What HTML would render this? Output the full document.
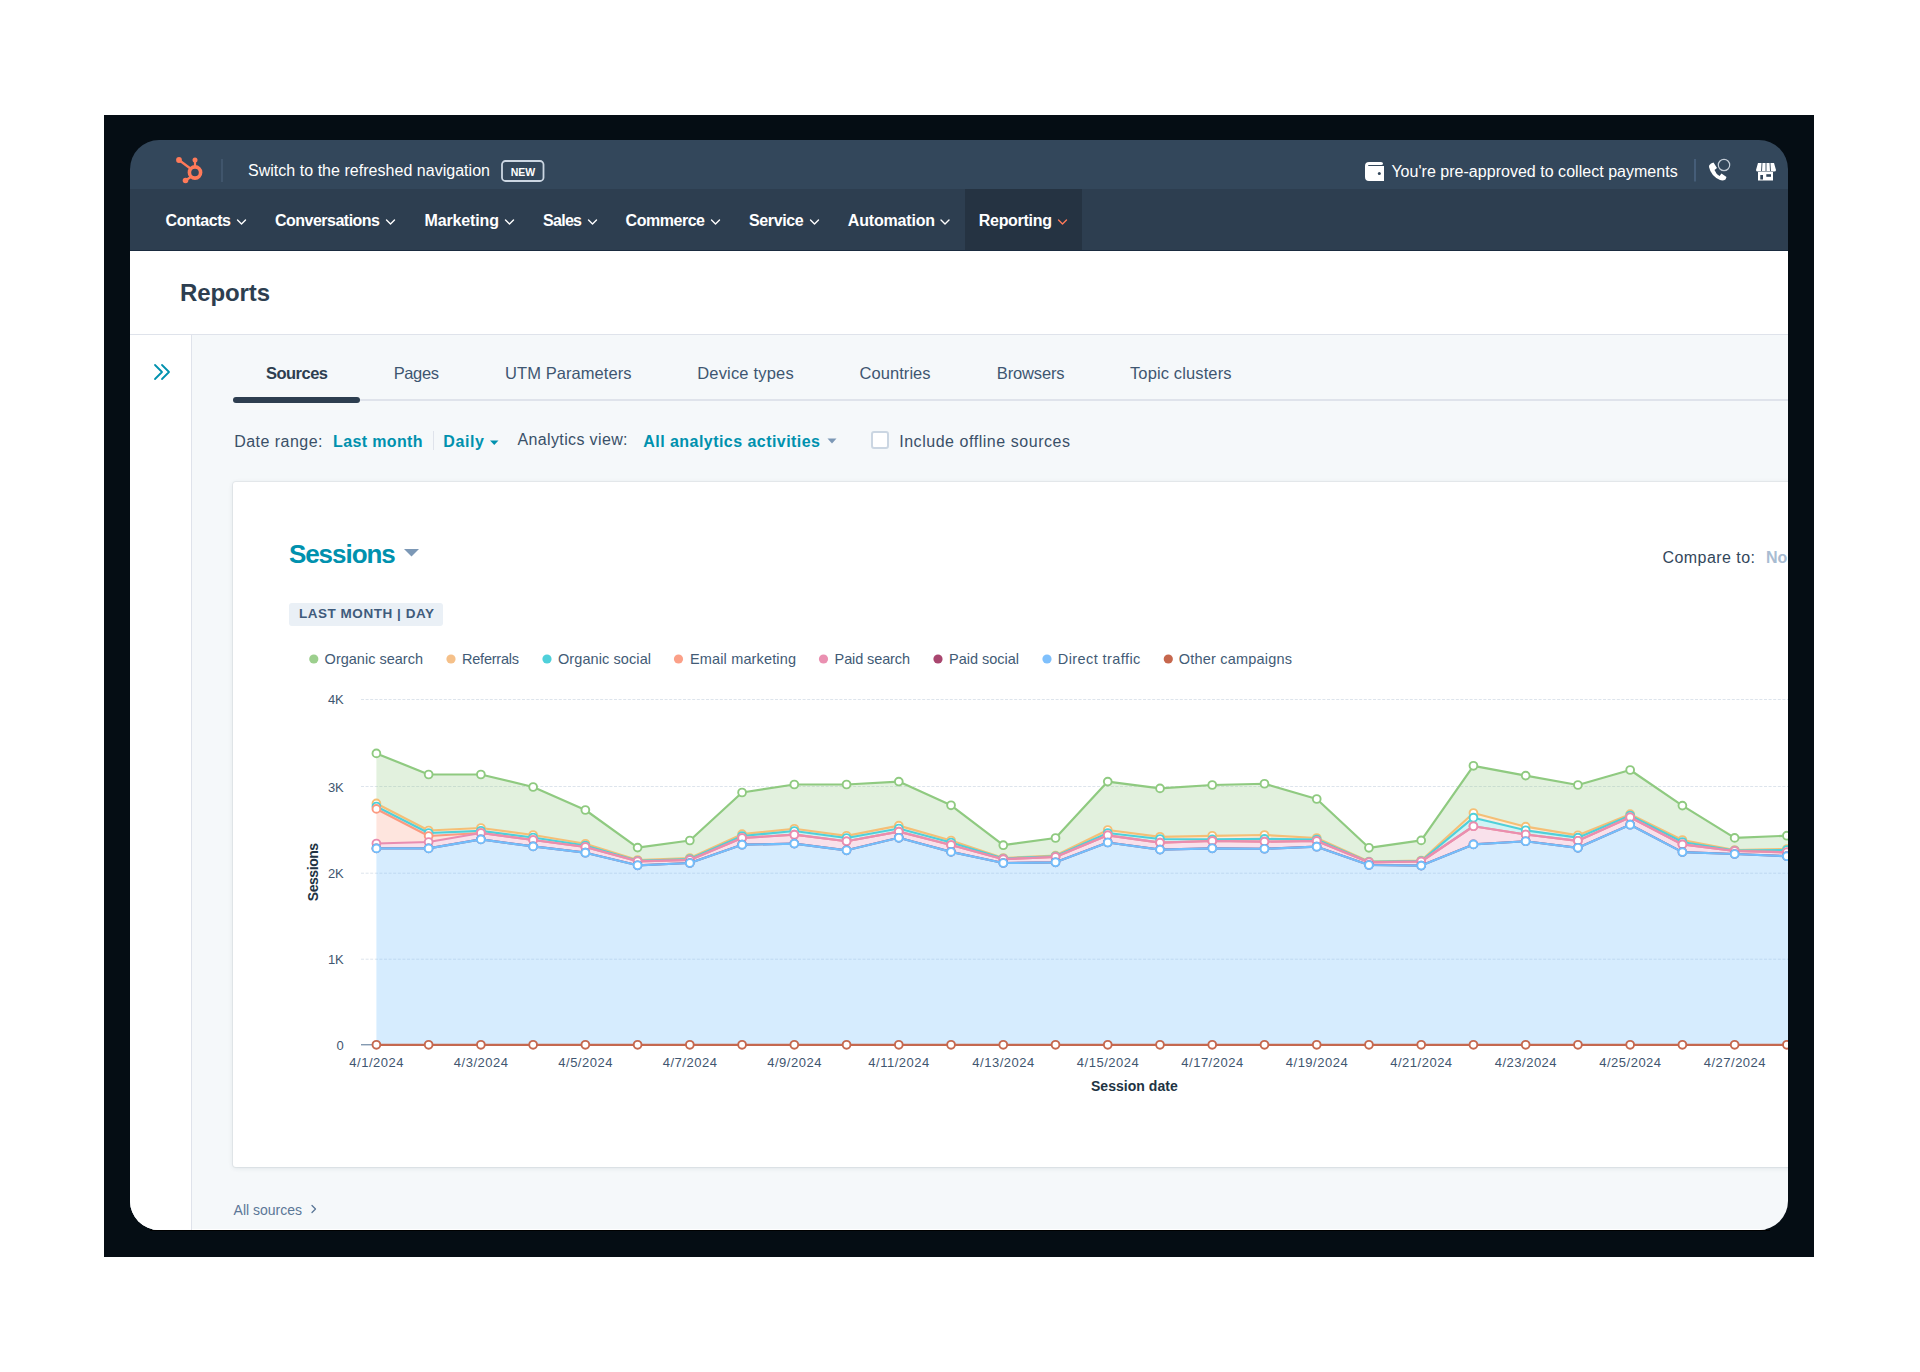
<!DOCTYPE html>
<html><head><meta charset="utf-8">
<style>
html,body{margin:0;padding:0;background:#ffffff;width:1920px;height:1372px;overflow:hidden;}
body{font-family:"Liberation Sans",sans-serif;position:relative;}
.frame{position:absolute;left:104px;top:115px;width:1710px;height:1142px;background:#050d14;}
.inner{position:absolute;left:130px;top:140px;width:1658px;height:1090px;border-radius:29px;overflow:hidden;}
.pg{position:absolute;left:-130px;top:-140px;width:1920px;height:1372px;}
.abs{position:absolute;}
.t{position:absolute;white-space:pre;}
svg{position:absolute;left:0;top:0;overflow:visible;}
</style></head>
<body>
<div class="frame"></div>
<div class="abs" style="left:150px;top:1230px;width:1620px;height:1px;background:#000000;"></div>
<div class="inner"><div class="pg">
  <div class="abs" style="left:130px;top:251px;width:1658px;height:990px;background:#f5f8fa;"></div>
  <!-- top bar -->
  <div class="abs" style="left:130px;top:140px;width:1658px;height:49px;background:#33475b;"></div>
  <!-- nav -->
  <div class="abs" style="left:130px;top:189px;width:1658px;height:62px;background:#2d3e50;"></div>
  <div class="abs" style="left:965px;top:189px;width:117px;height:62px;background:#253342;"></div>
  <div class="abs" style="left:130px;top:250px;width:1658px;height:1px;background:#1a2b3f;"></div>
  <!-- header -->
  <div class="abs" style="left:130px;top:251px;width:1658px;height:83px;background:#ffffff;border-bottom:1px solid #dfe3eb;"></div>
  <div class="abs" style="left:130px;top:1229px;width:1658px;height:1px;background:#ffffff;"></div>
  <!-- sidebar -->
  <div class="abs" style="left:130px;top:335px;width:61px;height:900px;background:#ffffff;border-right:1px solid #dfe3eb;"></div>
  <!-- tab line -->
  <div class="abs" style="left:233px;top:399px;width:1560px;height:2px;background:#dfe3eb;"></div>
  <div class="abs" style="left:233px;top:397px;width:127px;height:6px;background:#2d3e50;border-radius:3px;"></div>
  <!-- filter separator -->
  <div class="abs" style="left:432.5px;top:431px;width:1px;height:19px;background:#dfe3eb;"></div>
  <!-- checkbox -->
  <div class="abs" style="left:871px;top:431px;width:14px;height:14px;border:2px solid #cbd6e2;border-radius:3px;background:#ffffff;"></div>
  <!-- card -->
  <div class="abs" style="left:233px;top:482px;width:1600px;height:684.5px;background:#ffffff;border-radius:3px;box-shadow:0 0 0 1px rgba(45,62,80,0.06),0 1px 5px 0 rgba(45,62,80,0.12);"></div>
  <!-- badge -->
  <div class="abs" style="left:289px;top:603px;width:154px;height:22.5px;background:#eaf0f6;border-radius:3px;"></div>

  <svg width="1920" height="1372" viewBox="0 0 1920 1372">
    <!-- hubspot logo -->
    <g fill="#ff7a59" stroke="#ff7a59">
      <circle cx="195" cy="172.5" r="5.6" fill="none" stroke-width="3.6"/>
      <line x1="179" y1="160" x2="191" y2="169" stroke-width="2.2"/>
      <circle cx="179" cy="160" r="2.9" stroke="none"/>
      <line x1="195" y1="160" x2="195" y2="166" stroke-width="2.2"/>
      <circle cx="195" cy="160" r="2.5" stroke="none"/>
      <line x1="185.5" y1="180.5" x2="191.5" y2="176.5" stroke-width="2.2"/>
      <circle cx="185.5" cy="180.5" r="2.8" stroke="none"/>
    </g>
    <line x1="222" y1="159" x2="222" y2="182" stroke="#4a6078" stroke-width="1.2"/>
    <rect x="502" y="161" width="41.5" height="20" rx="3.5" fill="none" stroke="#cbd6e2" stroke-width="1.8"/>
    <!-- nav chevrons -->
    <g fill="none" stroke="#ffffff" stroke-width="1.4" stroke-linecap="round" stroke-linejoin="round">
      <polyline points="237.5,220 241.5,224 245.5,220"/>
      <polyline points="386.5,220 390.5,224 394.5,220"/>
      <polyline points="505.5,220 509.5,224 513.5,220"/>
      <polyline points="588.5,220 592.5,224 596.5,220"/>
      <polyline points="711.5,220 715.5,224 719.5,220"/>
      <polyline points="810.5,220 814.5,224 818.5,220"/>
      <polyline points="941,220 945,224 949,220"/>
      <polyline points="1058.5,220 1062.5,224 1066.5,220" stroke="#ff7a59"/>
    </g>
    <!-- wallet -->
    <g fill="#ffffff">
      <path d="M1365,166 Q1365,162 1369,162 L1381,162 Q1383,162 1383,163.5 Q1383,165 1381,165 L1369,165 Q1368,165 1368,166 L1384,166 L1384,181 L1369,181 Q1365,181 1365,177 Z"/>
      <circle cx="1379.3" cy="173.6" r="1.5" fill="#33475b"/>
    </g>
    <line x1="1695" y1="159" x2="1695" y2="181.5" stroke="#4c6582" stroke-width="1.5"/>
    <!-- phone -->
    <path d="M1711,163.5 L1713.5,162.5 L1717,168 L1714.5,170 Q1716,174 1719.5,176 L1721.5,173.5 L1726.5,177 L1725.5,179.5 Q1723,181 1720,180 Q1711,176 1709,167 Q1708.5,165 1711,163.5 Z" fill="#ffffff"/>
    <circle cx="1724" cy="165" r="5.7" fill="none" stroke="#c3ccd6" stroke-width="1.2"/>
    <!-- store -->
    <g fill="#ffffff">
      <path d="M1758,163 L1774,163 L1776,170 Q1776,171.5 1774,171.5 L1758,171.5 Q1756,171.5 1756,170 Z"/>
      <rect x="1758" y="172" width="15" height="8.5"/>
    </g>
    <g stroke="#33475b" stroke-width="0.9">
      <line x1="1762" y1="163" x2="1761.5" y2="171"/>
      <line x1="1766" y1="163" x2="1766" y2="171"/>
      <line x1="1770" y1="163" x2="1770.5" y2="171"/>
    </g>
    <rect x="1760.3" y="175" width="2.7" height="4.5" fill="#33475b"/>
    <rect x="1766.3" y="174.2" width="4.7" height="2.6" fill="#33475b"/>
    <!-- sidebar >> -->
    <g fill="none" stroke="#0091ae" stroke-width="1.8" stroke-linecap="round" stroke-linejoin="round">
      <polyline points="155,365 162,372 155,379"/>
      <polyline points="162,365 169,372 162,379"/>
    </g>
    <!-- carets -->
    <path d="M490,440.5 L498.5,440.5 L494.25,445 Z" fill="#0091ae"/>
    <path d="M827.5,438.5 L836.5,438.5 L832,443.5 Z" fill="#7c98b6"/>
    <path d="M404,549 L419,549 L411.5,556.5 Z" fill="#7c98b6"/>
    <!-- legend dots -->
    <circle cx="313.8" cy="659" r="4.6" fill="#9ccf8d"/>
    <circle cx="451" cy="659" r="4.6" fill="#f5c089"/>
    <circle cx="547" cy="659" r="4.6" fill="#4fd0da"/>
    <circle cx="678.5" cy="659" r="4.6" fill="#fba088"/>
    <circle cx="823.5" cy="659" r="4.6" fill="#ea90b1"/>
    <circle cx="938" cy="659" r="4.6" fill="#a9466f"/>
    <circle cx="1047" cy="659" r="4.6" fill="#7fc0fc"/>
    <circle cx="1168.3" cy="659" r="4.6" fill="#c6674d"/>
    <!-- all sources chevron -->
    <polyline points="312,1205.5 315.5,1209 312,1212.5" fill="none" stroke="#5b7797" stroke-width="1.3" stroke-linecap="round" stroke-linejoin="round"/>
    <!-- chart -->
    <g>
<line x1="361" y1="699.50" x2="1800" y2="699.50" stroke="#dde4ec" stroke-width="1" stroke-dasharray="3,1.6"/>
<line x1="361" y1="786.50" x2="1800" y2="786.50" stroke="#dde4ec" stroke-width="1" stroke-dasharray="3,1.6"/>
<line x1="361" y1="873.20" x2="1800" y2="873.20" stroke="#dde4ec" stroke-width="1" stroke-dasharray="3,1.6"/>
<line x1="361" y1="959.20" x2="1800" y2="959.20" stroke="#dde4ec" stroke-width="1" stroke-dasharray="3,1.6"/>
<line x1="361" y1="1044.8" x2="1800" y2="1044.8" stroke="#516f90" stroke-width="1"/>
<polygon points="376.40,753.40 428.64,774.50 480.88,774.50 533.12,787.00 585.36,810.00 637.60,847.60 689.84,840.50 742.08,792.50 794.32,784.50 846.56,784.50 898.80,781.60 951.04,805.30 1003.28,845.20 1055.52,838.00 1107.76,781.60 1160.00,788.40 1212.24,785.00 1264.48,783.75 1316.72,799.00 1368.96,847.80 1421.20,840.40 1473.44,765.80 1525.68,775.60 1577.92,785.00 1630.16,770.00 1682.40,805.60 1734.64,837.90 1786.88,835.70 1839.12,835.70 1839.12,849.00 1786.88,849.00 1734.64,850.00 1682.40,840.00 1630.16,814.20 1577.92,835.30 1525.68,826.70 1473.44,813.00 1421.20,860.50 1368.96,861.60 1316.72,838.00 1264.48,835.00 1212.24,835.80 1160.00,836.80 1107.76,830.00 1055.52,855.60 1003.28,858.00 951.04,840.50 898.80,825.60 846.56,835.80 794.32,828.75 742.08,834.20 689.84,858.00 637.60,860.00 585.36,843.75 533.12,835.00 480.88,828.00 428.64,830.50 376.40,803.40" fill="#8fca80" fill-opacity="0.26"/>
<polyline points="376.40,753.40 428.64,774.50 480.88,774.50 533.12,787.00 585.36,810.00 637.60,847.60 689.84,840.50 742.08,792.50 794.32,784.50 846.56,784.50 898.80,781.60 951.04,805.30 1003.28,845.20 1055.52,838.00 1107.76,781.60 1160.00,788.40 1212.24,785.00 1264.48,783.75 1316.72,799.00 1368.96,847.80 1421.20,840.40 1473.44,765.80 1525.68,775.60 1577.92,785.00 1630.16,770.00 1682.40,805.60 1734.64,837.90 1786.88,835.70 1839.12,835.70" fill="none" stroke="#8fca80" stroke-width="2.2" stroke-linejoin="round"/>
<circle cx="376.40" cy="753.40" r="3.9" fill="#fff" stroke="#8fca80" stroke-width="1.9"/>
<circle cx="428.64" cy="774.50" r="3.9" fill="#fff" stroke="#8fca80" stroke-width="1.9"/>
<circle cx="480.88" cy="774.50" r="3.9" fill="#fff" stroke="#8fca80" stroke-width="1.9"/>
<circle cx="533.12" cy="787.00" r="3.9" fill="#fff" stroke="#8fca80" stroke-width="1.9"/>
<circle cx="585.36" cy="810.00" r="3.9" fill="#fff" stroke="#8fca80" stroke-width="1.9"/>
<circle cx="637.60" cy="847.60" r="3.9" fill="#fff" stroke="#8fca80" stroke-width="1.9"/>
<circle cx="689.84" cy="840.50" r="3.9" fill="#fff" stroke="#8fca80" stroke-width="1.9"/>
<circle cx="742.08" cy="792.50" r="3.9" fill="#fff" stroke="#8fca80" stroke-width="1.9"/>
<circle cx="794.32" cy="784.50" r="3.9" fill="#fff" stroke="#8fca80" stroke-width="1.9"/>
<circle cx="846.56" cy="784.50" r="3.9" fill="#fff" stroke="#8fca80" stroke-width="1.9"/>
<circle cx="898.80" cy="781.60" r="3.9" fill="#fff" stroke="#8fca80" stroke-width="1.9"/>
<circle cx="951.04" cy="805.30" r="3.9" fill="#fff" stroke="#8fca80" stroke-width="1.9"/>
<circle cx="1003.28" cy="845.20" r="3.9" fill="#fff" stroke="#8fca80" stroke-width="1.9"/>
<circle cx="1055.52" cy="838.00" r="3.9" fill="#fff" stroke="#8fca80" stroke-width="1.9"/>
<circle cx="1107.76" cy="781.60" r="3.9" fill="#fff" stroke="#8fca80" stroke-width="1.9"/>
<circle cx="1160.00" cy="788.40" r="3.9" fill="#fff" stroke="#8fca80" stroke-width="1.9"/>
<circle cx="1212.24" cy="785.00" r="3.9" fill="#fff" stroke="#8fca80" stroke-width="1.9"/>
<circle cx="1264.48" cy="783.75" r="3.9" fill="#fff" stroke="#8fca80" stroke-width="1.9"/>
<circle cx="1316.72" cy="799.00" r="3.9" fill="#fff" stroke="#8fca80" stroke-width="1.9"/>
<circle cx="1368.96" cy="847.80" r="3.9" fill="#fff" stroke="#8fca80" stroke-width="1.9"/>
<circle cx="1421.20" cy="840.40" r="3.9" fill="#fff" stroke="#8fca80" stroke-width="1.9"/>
<circle cx="1473.44" cy="765.80" r="3.9" fill="#fff" stroke="#8fca80" stroke-width="1.9"/>
<circle cx="1525.68" cy="775.60" r="3.9" fill="#fff" stroke="#8fca80" stroke-width="1.9"/>
<circle cx="1577.92" cy="785.00" r="3.9" fill="#fff" stroke="#8fca80" stroke-width="1.9"/>
<circle cx="1630.16" cy="770.00" r="3.9" fill="#fff" stroke="#8fca80" stroke-width="1.9"/>
<circle cx="1682.40" cy="805.60" r="3.9" fill="#fff" stroke="#8fca80" stroke-width="1.9"/>
<circle cx="1734.64" cy="837.90" r="3.9" fill="#fff" stroke="#8fca80" stroke-width="1.9"/>
<circle cx="1786.88" cy="835.70" r="3.9" fill="#fff" stroke="#8fca80" stroke-width="1.9"/>
<circle cx="1839.12" cy="835.70" r="3.9" fill="#fff" stroke="#8fca80" stroke-width="1.9"/>
<polygon points="376.40,803.40 428.64,830.50 480.88,828.00 533.12,835.00 585.36,843.75 637.60,860.00 689.84,858.00 742.08,834.20 794.32,828.75 846.56,835.80 898.80,825.60 951.04,840.50 1003.28,858.00 1055.52,855.60 1107.76,830.00 1160.00,836.80 1212.24,835.80 1264.48,835.00 1316.72,838.00 1368.96,861.60 1421.20,860.50 1473.44,813.00 1525.68,826.70 1577.92,835.30 1630.16,814.20 1682.40,840.00 1734.64,850.00 1786.88,849.00 1839.12,849.00 1839.12,850.00 1786.88,850.00 1734.64,850.50 1682.40,842.00 1630.16,815.50 1577.92,837.70 1525.68,830.30 1473.44,817.70 1421.20,861.00 1368.96,861.90 1316.72,839.50 1264.48,838.90 1212.24,839.40 1160.00,839.00 1107.76,833.00 1055.52,856.30 1003.28,858.50 951.04,842.50 898.80,828.50 846.56,838.00 794.32,831.00 742.08,836.00 689.84,859.00 637.60,860.80 585.36,845.50 533.12,837.50 480.88,830.80 428.64,833.00 376.40,806.50" fill="#f5bf76" fill-opacity="0.26"/>
<polyline points="376.40,803.40 428.64,830.50 480.88,828.00 533.12,835.00 585.36,843.75 637.60,860.00 689.84,858.00 742.08,834.20 794.32,828.75 846.56,835.80 898.80,825.60 951.04,840.50 1003.28,858.00 1055.52,855.60 1107.76,830.00 1160.00,836.80 1212.24,835.80 1264.48,835.00 1316.72,838.00 1368.96,861.60 1421.20,860.50 1473.44,813.00 1525.68,826.70 1577.92,835.30 1630.16,814.20 1682.40,840.00 1734.64,850.00 1786.88,849.00 1839.12,849.00" fill="none" stroke="#f5bf76" stroke-width="2.2" stroke-linejoin="round"/>
<circle cx="376.40" cy="803.40" r="3.9" fill="#fff" stroke="#f5bf76" stroke-width="1.9"/>
<circle cx="428.64" cy="830.50" r="3.9" fill="#fff" stroke="#f5bf76" stroke-width="1.9"/>
<circle cx="480.88" cy="828.00" r="3.9" fill="#fff" stroke="#f5bf76" stroke-width="1.9"/>
<circle cx="533.12" cy="835.00" r="3.9" fill="#fff" stroke="#f5bf76" stroke-width="1.9"/>
<circle cx="585.36" cy="843.75" r="3.9" fill="#fff" stroke="#f5bf76" stroke-width="1.9"/>
<circle cx="637.60" cy="860.00" r="3.9" fill="#fff" stroke="#f5bf76" stroke-width="1.9"/>
<circle cx="689.84" cy="858.00" r="3.9" fill="#fff" stroke="#f5bf76" stroke-width="1.9"/>
<circle cx="742.08" cy="834.20" r="3.9" fill="#fff" stroke="#f5bf76" stroke-width="1.9"/>
<circle cx="794.32" cy="828.75" r="3.9" fill="#fff" stroke="#f5bf76" stroke-width="1.9"/>
<circle cx="846.56" cy="835.80" r="3.9" fill="#fff" stroke="#f5bf76" stroke-width="1.9"/>
<circle cx="898.80" cy="825.60" r="3.9" fill="#fff" stroke="#f5bf76" stroke-width="1.9"/>
<circle cx="951.04" cy="840.50" r="3.9" fill="#fff" stroke="#f5bf76" stroke-width="1.9"/>
<circle cx="1003.28" cy="858.00" r="3.9" fill="#fff" stroke="#f5bf76" stroke-width="1.9"/>
<circle cx="1055.52" cy="855.60" r="3.9" fill="#fff" stroke="#f5bf76" stroke-width="1.9"/>
<circle cx="1107.76" cy="830.00" r="3.9" fill="#fff" stroke="#f5bf76" stroke-width="1.9"/>
<circle cx="1160.00" cy="836.80" r="3.9" fill="#fff" stroke="#f5bf76" stroke-width="1.9"/>
<circle cx="1212.24" cy="835.80" r="3.9" fill="#fff" stroke="#f5bf76" stroke-width="1.9"/>
<circle cx="1264.48" cy="835.00" r="3.9" fill="#fff" stroke="#f5bf76" stroke-width="1.9"/>
<circle cx="1316.72" cy="838.00" r="3.9" fill="#fff" stroke="#f5bf76" stroke-width="1.9"/>
<circle cx="1368.96" cy="861.60" r="3.9" fill="#fff" stroke="#f5bf76" stroke-width="1.9"/>
<circle cx="1421.20" cy="860.50" r="3.9" fill="#fff" stroke="#f5bf76" stroke-width="1.9"/>
<circle cx="1473.44" cy="813.00" r="3.9" fill="#fff" stroke="#f5bf76" stroke-width="1.9"/>
<circle cx="1525.68" cy="826.70" r="3.9" fill="#fff" stroke="#f5bf76" stroke-width="1.9"/>
<circle cx="1577.92" cy="835.30" r="3.9" fill="#fff" stroke="#f5bf76" stroke-width="1.9"/>
<circle cx="1630.16" cy="814.20" r="3.9" fill="#fff" stroke="#f5bf76" stroke-width="1.9"/>
<circle cx="1682.40" cy="840.00" r="3.9" fill="#fff" stroke="#f5bf76" stroke-width="1.9"/>
<circle cx="1734.64" cy="850.00" r="3.9" fill="#fff" stroke="#f5bf76" stroke-width="1.9"/>
<circle cx="1786.88" cy="849.00" r="3.9" fill="#fff" stroke="#f5bf76" stroke-width="1.9"/>
<circle cx="1839.12" cy="849.00" r="3.9" fill="#fff" stroke="#f5bf76" stroke-width="1.9"/>
<polygon points="376.40,806.50 428.64,833.00 480.88,830.80 533.12,837.50 585.36,845.50 637.60,860.80 689.84,859.00 742.08,836.00 794.32,831.00 846.56,838.00 898.80,828.50 951.04,842.50 1003.28,858.50 1055.52,856.30 1107.76,833.00 1160.00,839.00 1212.24,839.40 1264.48,838.90 1316.72,839.50 1368.96,861.90 1421.20,861.00 1473.44,817.70 1525.68,830.30 1577.92,837.70 1630.16,815.50 1682.40,842.00 1734.64,850.50 1786.88,850.00 1839.12,850.00 1839.12,852.30 1786.88,852.30 1734.64,851.00 1682.40,844.40 1630.16,817.30 1577.92,840.80 1525.68,834.50 1473.44,826.25 1421.20,861.50 1368.96,862.30 1316.72,841.00 1264.48,841.60 1212.24,841.00 1160.00,842.60 1107.76,835.30 1055.52,857.00 1003.28,859.20 951.04,845.00 898.80,831.60 846.56,841.25 794.32,834.70 742.08,838.00 689.84,860.00 637.60,861.30 585.36,847.00 533.12,840.00 480.88,833.00 428.64,836.00 376.40,808.90" fill="#4fd0da" fill-opacity="0.26"/>
<polyline points="376.40,806.50 428.64,833.00 480.88,830.80 533.12,837.50 585.36,845.50 637.60,860.80 689.84,859.00 742.08,836.00 794.32,831.00 846.56,838.00 898.80,828.50 951.04,842.50 1003.28,858.50 1055.52,856.30 1107.76,833.00 1160.00,839.00 1212.24,839.40 1264.48,838.90 1316.72,839.50 1368.96,861.90 1421.20,861.00 1473.44,817.70 1525.68,830.30 1577.92,837.70 1630.16,815.50 1682.40,842.00 1734.64,850.50 1786.88,850.00 1839.12,850.00" fill="none" stroke="#4fd0da" stroke-width="2.2" stroke-linejoin="round"/>
<circle cx="376.40" cy="806.50" r="3.9" fill="#fff" stroke="#4fd0da" stroke-width="1.9"/>
<circle cx="428.64" cy="833.00" r="3.9" fill="#fff" stroke="#4fd0da" stroke-width="1.9"/>
<circle cx="480.88" cy="830.80" r="3.9" fill="#fff" stroke="#4fd0da" stroke-width="1.9"/>
<circle cx="533.12" cy="837.50" r="3.9" fill="#fff" stroke="#4fd0da" stroke-width="1.9"/>
<circle cx="585.36" cy="845.50" r="3.9" fill="#fff" stroke="#4fd0da" stroke-width="1.9"/>
<circle cx="637.60" cy="860.80" r="3.9" fill="#fff" stroke="#4fd0da" stroke-width="1.9"/>
<circle cx="689.84" cy="859.00" r="3.9" fill="#fff" stroke="#4fd0da" stroke-width="1.9"/>
<circle cx="742.08" cy="836.00" r="3.9" fill="#fff" stroke="#4fd0da" stroke-width="1.9"/>
<circle cx="794.32" cy="831.00" r="3.9" fill="#fff" stroke="#4fd0da" stroke-width="1.9"/>
<circle cx="846.56" cy="838.00" r="3.9" fill="#fff" stroke="#4fd0da" stroke-width="1.9"/>
<circle cx="898.80" cy="828.50" r="3.9" fill="#fff" stroke="#4fd0da" stroke-width="1.9"/>
<circle cx="951.04" cy="842.50" r="3.9" fill="#fff" stroke="#4fd0da" stroke-width="1.9"/>
<circle cx="1003.28" cy="858.50" r="3.9" fill="#fff" stroke="#4fd0da" stroke-width="1.9"/>
<circle cx="1055.52" cy="856.30" r="3.9" fill="#fff" stroke="#4fd0da" stroke-width="1.9"/>
<circle cx="1107.76" cy="833.00" r="3.9" fill="#fff" stroke="#4fd0da" stroke-width="1.9"/>
<circle cx="1160.00" cy="839.00" r="3.9" fill="#fff" stroke="#4fd0da" stroke-width="1.9"/>
<circle cx="1212.24" cy="839.40" r="3.9" fill="#fff" stroke="#4fd0da" stroke-width="1.9"/>
<circle cx="1264.48" cy="838.90" r="3.9" fill="#fff" stroke="#4fd0da" stroke-width="1.9"/>
<circle cx="1316.72" cy="839.50" r="3.9" fill="#fff" stroke="#4fd0da" stroke-width="1.9"/>
<circle cx="1368.96" cy="861.90" r="3.9" fill="#fff" stroke="#4fd0da" stroke-width="1.9"/>
<circle cx="1421.20" cy="861.00" r="3.9" fill="#fff" stroke="#4fd0da" stroke-width="1.9"/>
<circle cx="1473.44" cy="817.70" r="3.9" fill="#fff" stroke="#4fd0da" stroke-width="1.9"/>
<circle cx="1525.68" cy="830.30" r="3.9" fill="#fff" stroke="#4fd0da" stroke-width="1.9"/>
<circle cx="1577.92" cy="837.70" r="3.9" fill="#fff" stroke="#4fd0da" stroke-width="1.9"/>
<circle cx="1630.16" cy="815.50" r="3.9" fill="#fff" stroke="#4fd0da" stroke-width="1.9"/>
<circle cx="1682.40" cy="842.00" r="3.9" fill="#fff" stroke="#4fd0da" stroke-width="1.9"/>
<circle cx="1734.64" cy="850.50" r="3.9" fill="#fff" stroke="#4fd0da" stroke-width="1.9"/>
<circle cx="1786.88" cy="850.00" r="3.9" fill="#fff" stroke="#4fd0da" stroke-width="1.9"/>
<circle cx="1839.12" cy="850.00" r="3.9" fill="#fff" stroke="#4fd0da" stroke-width="1.9"/>
<polygon points="376.40,808.90 428.64,836.00 480.88,833.00 533.12,840.00 585.36,847.00 637.60,861.30 689.84,860.00 742.08,838.00 794.32,834.70 846.56,841.25 898.80,831.60 951.04,845.00 1003.28,859.20 1055.52,857.00 1107.76,835.30 1160.00,842.60 1212.24,841.00 1264.48,841.60 1316.72,841.00 1368.96,862.30 1421.20,861.50 1473.44,826.25 1525.68,834.50 1577.92,840.80 1630.16,817.30 1682.40,844.40 1734.64,851.00 1786.88,852.30 1839.12,852.30 1839.12,852.30 1786.88,852.30 1734.64,851.00 1682.40,844.40 1630.16,817.30 1577.92,840.80 1525.68,834.50 1473.44,826.25 1421.20,861.50 1368.96,862.30 1316.72,841.00 1264.48,841.60 1212.24,841.00 1160.00,842.60 1107.76,835.30 1055.52,857.00 1003.28,859.20 951.04,845.00 898.80,831.60 846.56,841.25 794.32,834.70 742.08,838.00 689.84,860.00 637.60,861.30 585.36,847.00 533.12,840.00 480.88,833.00 428.64,842.00 376.40,843.50" fill="#fb9a80" fill-opacity="0.26"/>
<polyline points="376.40,808.90 428.64,836.00 480.88,833.00 533.12,840.00 585.36,847.00 637.60,861.30 689.84,860.00 742.08,838.00 794.32,834.70 846.56,841.25 898.80,831.60 951.04,845.00 1003.28,859.20 1055.52,857.00 1107.76,835.30 1160.00,842.60 1212.24,841.00 1264.48,841.60 1316.72,841.00 1368.96,862.30 1421.20,861.50 1473.44,826.25 1525.68,834.50 1577.92,840.80 1630.16,817.30 1682.40,844.40 1734.64,851.00 1786.88,852.30 1839.12,852.30" fill="none" stroke="#fb9a80" stroke-width="2.2" stroke-linejoin="round"/>
<circle cx="376.40" cy="808.90" r="3.9" fill="#fff" stroke="#fb9a80" stroke-width="1.9"/>
<circle cx="428.64" cy="836.00" r="3.9" fill="#fff" stroke="#fb9a80" stroke-width="1.9"/>
<circle cx="480.88" cy="833.00" r="3.9" fill="#fff" stroke="#fb9a80" stroke-width="1.9"/>
<circle cx="533.12" cy="840.00" r="3.9" fill="#fff" stroke="#fb9a80" stroke-width="1.9"/>
<circle cx="585.36" cy="847.00" r="3.9" fill="#fff" stroke="#fb9a80" stroke-width="1.9"/>
<circle cx="637.60" cy="861.30" r="3.9" fill="#fff" stroke="#fb9a80" stroke-width="1.9"/>
<circle cx="689.84" cy="860.00" r="3.9" fill="#fff" stroke="#fb9a80" stroke-width="1.9"/>
<circle cx="742.08" cy="838.00" r="3.9" fill="#fff" stroke="#fb9a80" stroke-width="1.9"/>
<circle cx="794.32" cy="834.70" r="3.9" fill="#fff" stroke="#fb9a80" stroke-width="1.9"/>
<circle cx="846.56" cy="841.25" r="3.9" fill="#fff" stroke="#fb9a80" stroke-width="1.9"/>
<circle cx="898.80" cy="831.60" r="3.9" fill="#fff" stroke="#fb9a80" stroke-width="1.9"/>
<circle cx="951.04" cy="845.00" r="3.9" fill="#fff" stroke="#fb9a80" stroke-width="1.9"/>
<circle cx="1003.28" cy="859.20" r="3.9" fill="#fff" stroke="#fb9a80" stroke-width="1.9"/>
<circle cx="1055.52" cy="857.00" r="3.9" fill="#fff" stroke="#fb9a80" stroke-width="1.9"/>
<circle cx="1107.76" cy="835.30" r="3.9" fill="#fff" stroke="#fb9a80" stroke-width="1.9"/>
<circle cx="1160.00" cy="842.60" r="3.9" fill="#fff" stroke="#fb9a80" stroke-width="1.9"/>
<circle cx="1212.24" cy="841.00" r="3.9" fill="#fff" stroke="#fb9a80" stroke-width="1.9"/>
<circle cx="1264.48" cy="841.60" r="3.9" fill="#fff" stroke="#fb9a80" stroke-width="1.9"/>
<circle cx="1316.72" cy="841.00" r="3.9" fill="#fff" stroke="#fb9a80" stroke-width="1.9"/>
<circle cx="1368.96" cy="862.30" r="3.9" fill="#fff" stroke="#fb9a80" stroke-width="1.9"/>
<circle cx="1421.20" cy="861.50" r="3.9" fill="#fff" stroke="#fb9a80" stroke-width="1.9"/>
<circle cx="1473.44" cy="826.25" r="3.9" fill="#fff" stroke="#fb9a80" stroke-width="1.9"/>
<circle cx="1525.68" cy="834.50" r="3.9" fill="#fff" stroke="#fb9a80" stroke-width="1.9"/>
<circle cx="1577.92" cy="840.80" r="3.9" fill="#fff" stroke="#fb9a80" stroke-width="1.9"/>
<circle cx="1630.16" cy="817.30" r="3.9" fill="#fff" stroke="#fb9a80" stroke-width="1.9"/>
<circle cx="1682.40" cy="844.40" r="3.9" fill="#fff" stroke="#fb9a80" stroke-width="1.9"/>
<circle cx="1734.64" cy="851.00" r="3.9" fill="#fff" stroke="#fb9a80" stroke-width="1.9"/>
<circle cx="1786.88" cy="852.30" r="3.9" fill="#fff" stroke="#fb9a80" stroke-width="1.9"/>
<circle cx="1839.12" cy="852.30" r="3.9" fill="#fff" stroke="#fb9a80" stroke-width="1.9"/>
<polygon points="376.40,843.50 428.64,842.00 480.88,833.00 533.12,840.00 585.36,847.00 637.60,861.30 689.84,860.00 742.08,838.00 794.32,834.70 846.56,841.25 898.80,831.60 951.04,845.00 1003.28,859.20 1055.52,857.00 1107.76,835.30 1160.00,842.60 1212.24,841.00 1264.48,841.60 1316.72,841.00 1368.96,862.30 1421.20,861.50 1473.44,826.25 1525.68,834.50 1577.92,840.80 1630.16,817.30 1682.40,844.40 1734.64,851.00 1786.88,852.30 1839.12,852.30 1839.12,856.20 1786.88,856.20 1734.64,854.00 1682.40,852.10 1630.16,824.70 1577.92,847.80 1525.68,841.25 1473.44,844.40 1421.20,865.60 1368.96,865.00 1316.72,846.70 1264.48,848.75 1212.24,848.30 1160.00,849.60 1107.76,842.50 1055.52,862.30 1003.28,863.00 951.04,851.90 898.80,837.80 846.56,850.30 794.32,843.60 742.08,844.70 689.84,863.00 637.60,865.30 585.36,852.70 533.12,846.40 480.88,839.40 428.64,848.40 376.40,848.40" fill="#e98db0" fill-opacity="0.26"/>
<polyline points="376.40,843.50 428.64,842.00 480.88,833.00 533.12,840.00 585.36,847.00 637.60,861.30 689.84,860.00 742.08,838.00 794.32,834.70 846.56,841.25 898.80,831.60 951.04,845.00 1003.28,859.20 1055.52,857.00 1107.76,835.30 1160.00,842.60 1212.24,841.00 1264.48,841.60 1316.72,841.00 1368.96,862.30 1421.20,861.50 1473.44,826.25 1525.68,834.50 1577.92,840.80 1630.16,817.30 1682.40,844.40 1734.64,851.00 1786.88,852.30 1839.12,852.30" fill="none" stroke="#e98db0" stroke-width="2.2" stroke-linejoin="round"/>
<circle cx="376.40" cy="843.50" r="3.9" fill="#fff" stroke="#e98db0" stroke-width="1.9"/>
<circle cx="428.64" cy="842.00" r="3.9" fill="#fff" stroke="#e98db0" stroke-width="1.9"/>
<circle cx="480.88" cy="833.00" r="3.9" fill="#fff" stroke="#e98db0" stroke-width="1.9"/>
<circle cx="533.12" cy="840.00" r="3.9" fill="#fff" stroke="#e98db0" stroke-width="1.9"/>
<circle cx="585.36" cy="847.00" r="3.9" fill="#fff" stroke="#e98db0" stroke-width="1.9"/>
<circle cx="637.60" cy="861.30" r="3.9" fill="#fff" stroke="#e98db0" stroke-width="1.9"/>
<circle cx="689.84" cy="860.00" r="3.9" fill="#fff" stroke="#e98db0" stroke-width="1.9"/>
<circle cx="742.08" cy="838.00" r="3.9" fill="#fff" stroke="#e98db0" stroke-width="1.9"/>
<circle cx="794.32" cy="834.70" r="3.9" fill="#fff" stroke="#e98db0" stroke-width="1.9"/>
<circle cx="846.56" cy="841.25" r="3.9" fill="#fff" stroke="#e98db0" stroke-width="1.9"/>
<circle cx="898.80" cy="831.60" r="3.9" fill="#fff" stroke="#e98db0" stroke-width="1.9"/>
<circle cx="951.04" cy="845.00" r="3.9" fill="#fff" stroke="#e98db0" stroke-width="1.9"/>
<circle cx="1003.28" cy="859.20" r="3.9" fill="#fff" stroke="#e98db0" stroke-width="1.9"/>
<circle cx="1055.52" cy="857.00" r="3.9" fill="#fff" stroke="#e98db0" stroke-width="1.9"/>
<circle cx="1107.76" cy="835.30" r="3.9" fill="#fff" stroke="#e98db0" stroke-width="1.9"/>
<circle cx="1160.00" cy="842.60" r="3.9" fill="#fff" stroke="#e98db0" stroke-width="1.9"/>
<circle cx="1212.24" cy="841.00" r="3.9" fill="#fff" stroke="#e98db0" stroke-width="1.9"/>
<circle cx="1264.48" cy="841.60" r="3.9" fill="#fff" stroke="#e98db0" stroke-width="1.9"/>
<circle cx="1316.72" cy="841.00" r="3.9" fill="#fff" stroke="#e98db0" stroke-width="1.9"/>
<circle cx="1368.96" cy="862.30" r="3.9" fill="#fff" stroke="#e98db0" stroke-width="1.9"/>
<circle cx="1421.20" cy="861.50" r="3.9" fill="#fff" stroke="#e98db0" stroke-width="1.9"/>
<circle cx="1473.44" cy="826.25" r="3.9" fill="#fff" stroke="#e98db0" stroke-width="1.9"/>
<circle cx="1525.68" cy="834.50" r="3.9" fill="#fff" stroke="#e98db0" stroke-width="1.9"/>
<circle cx="1577.92" cy="840.80" r="3.9" fill="#fff" stroke="#e98db0" stroke-width="1.9"/>
<circle cx="1630.16" cy="817.30" r="3.9" fill="#fff" stroke="#e98db0" stroke-width="1.9"/>
<circle cx="1682.40" cy="844.40" r="3.9" fill="#fff" stroke="#e98db0" stroke-width="1.9"/>
<circle cx="1734.64" cy="851.00" r="3.9" fill="#fff" stroke="#e98db0" stroke-width="1.9"/>
<circle cx="1786.88" cy="852.30" r="3.9" fill="#fff" stroke="#e98db0" stroke-width="1.9"/>
<circle cx="1839.12" cy="852.30" r="3.9" fill="#fff" stroke="#e98db0" stroke-width="1.9"/>
<polygon points="376.40,848.40 428.64,848.40 480.88,839.40 533.12,846.40 585.36,852.70 637.60,865.30 689.84,863.00 742.08,844.70 794.32,843.60 846.56,850.30 898.80,837.80 951.04,851.90 1003.28,863.00 1055.52,862.30 1107.76,842.50 1160.00,849.60 1212.24,848.30 1264.48,848.75 1316.72,846.70 1368.96,865.00 1421.20,865.60 1473.44,844.40 1525.68,841.25 1577.92,847.80 1630.16,824.70 1682.40,852.10 1734.64,854.00 1786.88,856.20 1839.12,856.20 1839.12,856.20 1786.88,856.20 1734.64,854.00 1682.40,852.10 1630.16,824.70 1577.92,847.80 1525.68,841.25 1473.44,844.40 1421.20,865.60 1368.96,865.00 1316.72,846.70 1264.48,848.75 1212.24,848.30 1160.00,849.60 1107.76,842.50 1055.52,862.30 1003.28,863.00 951.04,851.90 898.80,837.80 846.56,850.30 794.32,843.60 742.08,844.70 689.84,863.00 637.60,865.30 585.36,852.70 533.12,846.40 480.88,839.40 428.64,848.40 376.40,848.40" fill="#a9466f" fill-opacity="0.26"/>
<polyline points="376.40,848.40 428.64,848.40 480.88,839.40 533.12,846.40 585.36,852.70 637.60,865.30 689.84,863.00 742.08,844.70 794.32,843.60 846.56,850.30 898.80,837.80 951.04,851.90 1003.28,863.00 1055.52,862.30 1107.76,842.50 1160.00,849.60 1212.24,848.30 1264.48,848.75 1316.72,846.70 1368.96,865.00 1421.20,865.60 1473.44,844.40 1525.68,841.25 1577.92,847.80 1630.16,824.70 1682.40,852.10 1734.64,854.00 1786.88,856.20 1839.12,856.20" fill="none" stroke="#a9466f" stroke-width="2.2" stroke-linejoin="round"/>
<circle cx="376.40" cy="848.40" r="3.9" fill="#fff" stroke="#a9466f" stroke-width="1.9"/>
<circle cx="428.64" cy="848.40" r="3.9" fill="#fff" stroke="#a9466f" stroke-width="1.9"/>
<circle cx="480.88" cy="839.40" r="3.9" fill="#fff" stroke="#a9466f" stroke-width="1.9"/>
<circle cx="533.12" cy="846.40" r="3.9" fill="#fff" stroke="#a9466f" stroke-width="1.9"/>
<circle cx="585.36" cy="852.70" r="3.9" fill="#fff" stroke="#a9466f" stroke-width="1.9"/>
<circle cx="637.60" cy="865.30" r="3.9" fill="#fff" stroke="#a9466f" stroke-width="1.9"/>
<circle cx="689.84" cy="863.00" r="3.9" fill="#fff" stroke="#a9466f" stroke-width="1.9"/>
<circle cx="742.08" cy="844.70" r="3.9" fill="#fff" stroke="#a9466f" stroke-width="1.9"/>
<circle cx="794.32" cy="843.60" r="3.9" fill="#fff" stroke="#a9466f" stroke-width="1.9"/>
<circle cx="846.56" cy="850.30" r="3.9" fill="#fff" stroke="#a9466f" stroke-width="1.9"/>
<circle cx="898.80" cy="837.80" r="3.9" fill="#fff" stroke="#a9466f" stroke-width="1.9"/>
<circle cx="951.04" cy="851.90" r="3.9" fill="#fff" stroke="#a9466f" stroke-width="1.9"/>
<circle cx="1003.28" cy="863.00" r="3.9" fill="#fff" stroke="#a9466f" stroke-width="1.9"/>
<circle cx="1055.52" cy="862.30" r="3.9" fill="#fff" stroke="#a9466f" stroke-width="1.9"/>
<circle cx="1107.76" cy="842.50" r="3.9" fill="#fff" stroke="#a9466f" stroke-width="1.9"/>
<circle cx="1160.00" cy="849.60" r="3.9" fill="#fff" stroke="#a9466f" stroke-width="1.9"/>
<circle cx="1212.24" cy="848.30" r="3.9" fill="#fff" stroke="#a9466f" stroke-width="1.9"/>
<circle cx="1264.48" cy="848.75" r="3.9" fill="#fff" stroke="#a9466f" stroke-width="1.9"/>
<circle cx="1316.72" cy="846.70" r="3.9" fill="#fff" stroke="#a9466f" stroke-width="1.9"/>
<circle cx="1368.96" cy="865.00" r="3.9" fill="#fff" stroke="#a9466f" stroke-width="1.9"/>
<circle cx="1421.20" cy="865.60" r="3.9" fill="#fff" stroke="#a9466f" stroke-width="1.9"/>
<circle cx="1473.44" cy="844.40" r="3.9" fill="#fff" stroke="#a9466f" stroke-width="1.9"/>
<circle cx="1525.68" cy="841.25" r="3.9" fill="#fff" stroke="#a9466f" stroke-width="1.9"/>
<circle cx="1577.92" cy="847.80" r="3.9" fill="#fff" stroke="#a9466f" stroke-width="1.9"/>
<circle cx="1630.16" cy="824.70" r="3.9" fill="#fff" stroke="#a9466f" stroke-width="1.9"/>
<circle cx="1682.40" cy="852.10" r="3.9" fill="#fff" stroke="#a9466f" stroke-width="1.9"/>
<circle cx="1734.64" cy="854.00" r="3.9" fill="#fff" stroke="#a9466f" stroke-width="1.9"/>
<circle cx="1786.88" cy="856.20" r="3.9" fill="#fff" stroke="#a9466f" stroke-width="1.9"/>
<circle cx="1839.12" cy="856.20" r="3.9" fill="#fff" stroke="#a9466f" stroke-width="1.9"/>
<polygon points="376.40,848.40 428.64,848.40 480.88,839.40 533.12,846.40 585.36,852.70 637.60,865.30 689.84,863.00 742.08,844.70 794.32,843.60 846.56,850.30 898.80,837.80 951.04,851.90 1003.28,863.00 1055.52,862.30 1107.76,842.50 1160.00,849.60 1212.24,848.30 1264.48,848.75 1316.72,846.70 1368.96,865.00 1421.20,865.60 1473.44,844.40 1525.68,841.25 1577.92,847.80 1630.16,824.70 1682.40,852.10 1734.64,854.00 1786.88,856.20 1839.12,856.20 1839.12,1044.80 1786.88,1044.80 1734.64,1044.80 1682.40,1044.80 1630.16,1044.80 1577.92,1044.80 1525.68,1044.80 1473.44,1044.80 1421.20,1044.80 1368.96,1044.80 1316.72,1044.80 1264.48,1044.80 1212.24,1044.80 1160.00,1044.80 1107.76,1044.80 1055.52,1044.80 1003.28,1044.80 951.04,1044.80 898.80,1044.80 846.56,1044.80 794.32,1044.80 742.08,1044.80 689.84,1044.80 637.60,1044.80 585.36,1044.80 533.12,1044.80 480.88,1044.80 428.64,1044.80 376.40,1044.80" fill="#72befb" fill-opacity="0.29"/>
<polyline points="376.40,848.40 428.64,848.40 480.88,839.40 533.12,846.40 585.36,852.70 637.60,865.30 689.84,863.00 742.08,844.70 794.32,843.60 846.56,850.30 898.80,837.80 951.04,851.90 1003.28,863.00 1055.52,862.30 1107.76,842.50 1160.00,849.60 1212.24,848.30 1264.48,848.75 1316.72,846.70 1368.96,865.00 1421.20,865.60 1473.44,844.40 1525.68,841.25 1577.92,847.80 1630.16,824.70 1682.40,852.10 1734.64,854.00 1786.88,856.20 1839.12,856.20" fill="none" stroke="#72befb" stroke-width="2.2" stroke-linejoin="round"/>
<circle cx="376.40" cy="848.40" r="3.9" fill="#fff" stroke="#72befb" stroke-width="1.9"/>
<circle cx="428.64" cy="848.40" r="3.9" fill="#fff" stroke="#72befb" stroke-width="1.9"/>
<circle cx="480.88" cy="839.40" r="3.9" fill="#fff" stroke="#72befb" stroke-width="1.9"/>
<circle cx="533.12" cy="846.40" r="3.9" fill="#fff" stroke="#72befb" stroke-width="1.9"/>
<circle cx="585.36" cy="852.70" r="3.9" fill="#fff" stroke="#72befb" stroke-width="1.9"/>
<circle cx="637.60" cy="865.30" r="3.9" fill="#fff" stroke="#72befb" stroke-width="1.9"/>
<circle cx="689.84" cy="863.00" r="3.9" fill="#fff" stroke="#72befb" stroke-width="1.9"/>
<circle cx="742.08" cy="844.70" r="3.9" fill="#fff" stroke="#72befb" stroke-width="1.9"/>
<circle cx="794.32" cy="843.60" r="3.9" fill="#fff" stroke="#72befb" stroke-width="1.9"/>
<circle cx="846.56" cy="850.30" r="3.9" fill="#fff" stroke="#72befb" stroke-width="1.9"/>
<circle cx="898.80" cy="837.80" r="3.9" fill="#fff" stroke="#72befb" stroke-width="1.9"/>
<circle cx="951.04" cy="851.90" r="3.9" fill="#fff" stroke="#72befb" stroke-width="1.9"/>
<circle cx="1003.28" cy="863.00" r="3.9" fill="#fff" stroke="#72befb" stroke-width="1.9"/>
<circle cx="1055.52" cy="862.30" r="3.9" fill="#fff" stroke="#72befb" stroke-width="1.9"/>
<circle cx="1107.76" cy="842.50" r="3.9" fill="#fff" stroke="#72befb" stroke-width="1.9"/>
<circle cx="1160.00" cy="849.60" r="3.9" fill="#fff" stroke="#72befb" stroke-width="1.9"/>
<circle cx="1212.24" cy="848.30" r="3.9" fill="#fff" stroke="#72befb" stroke-width="1.9"/>
<circle cx="1264.48" cy="848.75" r="3.9" fill="#fff" stroke="#72befb" stroke-width="1.9"/>
<circle cx="1316.72" cy="846.70" r="3.9" fill="#fff" stroke="#72befb" stroke-width="1.9"/>
<circle cx="1368.96" cy="865.00" r="3.9" fill="#fff" stroke="#72befb" stroke-width="1.9"/>
<circle cx="1421.20" cy="865.60" r="3.9" fill="#fff" stroke="#72befb" stroke-width="1.9"/>
<circle cx="1473.44" cy="844.40" r="3.9" fill="#fff" stroke="#72befb" stroke-width="1.9"/>
<circle cx="1525.68" cy="841.25" r="3.9" fill="#fff" stroke="#72befb" stroke-width="1.9"/>
<circle cx="1577.92" cy="847.80" r="3.9" fill="#fff" stroke="#72befb" stroke-width="1.9"/>
<circle cx="1630.16" cy="824.70" r="3.9" fill="#fff" stroke="#72befb" stroke-width="1.9"/>
<circle cx="1682.40" cy="852.10" r="3.9" fill="#fff" stroke="#72befb" stroke-width="1.9"/>
<circle cx="1734.64" cy="854.00" r="3.9" fill="#fff" stroke="#72befb" stroke-width="1.9"/>
<circle cx="1786.88" cy="856.20" r="3.9" fill="#fff" stroke="#72befb" stroke-width="1.9"/>
<circle cx="1839.12" cy="856.20" r="3.9" fill="#fff" stroke="#72befb" stroke-width="1.9"/>
<polyline points="376.40,1044.80 428.64,1044.80 480.88,1044.80 533.12,1044.80 585.36,1044.80 637.60,1044.80 689.84,1044.80 742.08,1044.80 794.32,1044.80 846.56,1044.80 898.80,1044.80 951.04,1044.80 1003.28,1044.80 1055.52,1044.80 1107.76,1044.80 1160.00,1044.80 1212.24,1044.80 1264.48,1044.80 1316.72,1044.80 1368.96,1044.80 1421.20,1044.80 1473.44,1044.80 1525.68,1044.80 1577.92,1044.80 1630.16,1044.80 1682.40,1044.80 1734.64,1044.80 1786.88,1044.80 1839.12,1044.80" fill="none" stroke="#c5684f" stroke-width="2.2" stroke-linejoin="round"/>
<circle cx="376.40" cy="1044.80" r="3.9" fill="#fff" stroke="#c5684f" stroke-width="1.9"/>
<circle cx="428.64" cy="1044.80" r="3.9" fill="#fff" stroke="#c5684f" stroke-width="1.9"/>
<circle cx="480.88" cy="1044.80" r="3.9" fill="#fff" stroke="#c5684f" stroke-width="1.9"/>
<circle cx="533.12" cy="1044.80" r="3.9" fill="#fff" stroke="#c5684f" stroke-width="1.9"/>
<circle cx="585.36" cy="1044.80" r="3.9" fill="#fff" stroke="#c5684f" stroke-width="1.9"/>
<circle cx="637.60" cy="1044.80" r="3.9" fill="#fff" stroke="#c5684f" stroke-width="1.9"/>
<circle cx="689.84" cy="1044.80" r="3.9" fill="#fff" stroke="#c5684f" stroke-width="1.9"/>
<circle cx="742.08" cy="1044.80" r="3.9" fill="#fff" stroke="#c5684f" stroke-width="1.9"/>
<circle cx="794.32" cy="1044.80" r="3.9" fill="#fff" stroke="#c5684f" stroke-width="1.9"/>
<circle cx="846.56" cy="1044.80" r="3.9" fill="#fff" stroke="#c5684f" stroke-width="1.9"/>
<circle cx="898.80" cy="1044.80" r="3.9" fill="#fff" stroke="#c5684f" stroke-width="1.9"/>
<circle cx="951.04" cy="1044.80" r="3.9" fill="#fff" stroke="#c5684f" stroke-width="1.9"/>
<circle cx="1003.28" cy="1044.80" r="3.9" fill="#fff" stroke="#c5684f" stroke-width="1.9"/>
<circle cx="1055.52" cy="1044.80" r="3.9" fill="#fff" stroke="#c5684f" stroke-width="1.9"/>
<circle cx="1107.76" cy="1044.80" r="3.9" fill="#fff" stroke="#c5684f" stroke-width="1.9"/>
<circle cx="1160.00" cy="1044.80" r="3.9" fill="#fff" stroke="#c5684f" stroke-width="1.9"/>
<circle cx="1212.24" cy="1044.80" r="3.9" fill="#fff" stroke="#c5684f" stroke-width="1.9"/>
<circle cx="1264.48" cy="1044.80" r="3.9" fill="#fff" stroke="#c5684f" stroke-width="1.9"/>
<circle cx="1316.72" cy="1044.80" r="3.9" fill="#fff" stroke="#c5684f" stroke-width="1.9"/>
<circle cx="1368.96" cy="1044.80" r="3.9" fill="#fff" stroke="#c5684f" stroke-width="1.9"/>
<circle cx="1421.20" cy="1044.80" r="3.9" fill="#fff" stroke="#c5684f" stroke-width="1.9"/>
<circle cx="1473.44" cy="1044.80" r="3.9" fill="#fff" stroke="#c5684f" stroke-width="1.9"/>
<circle cx="1525.68" cy="1044.80" r="3.9" fill="#fff" stroke="#c5684f" stroke-width="1.9"/>
<circle cx="1577.92" cy="1044.80" r="3.9" fill="#fff" stroke="#c5684f" stroke-width="1.9"/>
<circle cx="1630.16" cy="1044.80" r="3.9" fill="#fff" stroke="#c5684f" stroke-width="1.9"/>
<circle cx="1682.40" cy="1044.80" r="3.9" fill="#fff" stroke="#c5684f" stroke-width="1.9"/>
<circle cx="1734.64" cy="1044.80" r="3.9" fill="#fff" stroke="#c5684f" stroke-width="1.9"/>
<circle cx="1786.88" cy="1044.80" r="3.9" fill="#fff" stroke="#c5684f" stroke-width="1.9"/>
<circle cx="1839.12" cy="1044.80" r="3.9" fill="#fff" stroke="#c5684f" stroke-width="1.9"/>
    </g>
  </svg>
  <div class="abs" style="left:283px;top:865px;width:60px;height:14px;transform:rotate(-90deg);transform-origin:30px 7px;">
    <span class="t" style="left:0.8px;top:0px;font-size:14px;line-height:14px;font-weight:700;color:#213343;letter-spacing:-0.45px;">Sessions</span>
  </div>
<span class="t" style="top:162.95px;font-size:16px;line-height:16px;font-weight:400;color:#ffffff;left:248.00px;letter-spacing:0.029px;">Switch to the refreshed navigation</span>
<span class="t" style="top:166.61px;font-size:10.5px;line-height:10.5px;font-weight:700;color:#ffffff;left:510.80px;letter-spacing:-0.050px;">NEW</span>
<span class="t" style="top:164.25px;font-size:16px;line-height:16px;font-weight:400;color:#ffffff;left:1391.40px;letter-spacing:0.026px;">You&#x27;re pre-approved to collect payments</span>
<span class="t" style="top:213.45px;font-size:16px;line-height:16px;font-weight:700;color:#ffffff;left:165.50px;letter-spacing:-0.422px;">Contacts</span>
<span class="t" style="top:213.45px;font-size:16px;line-height:16px;font-weight:700;color:#ffffff;left:275.00px;letter-spacing:-0.512px;">Conversations</span>
<span class="t" style="top:213.45px;font-size:16px;line-height:16px;font-weight:700;color:#ffffff;left:424.50px;letter-spacing:-0.135px;">Marketing</span>
<span class="t" style="top:213.45px;font-size:16px;line-height:16px;font-weight:700;color:#ffffff;left:543.00px;letter-spacing:-0.703px;">Sales</span>
<span class="t" style="top:213.45px;font-size:16px;line-height:16px;font-weight:700;color:#ffffff;left:625.60px;letter-spacing:-0.472px;">Commerce</span>
<span class="t" style="top:213.45px;font-size:16px;line-height:16px;font-weight:700;color:#ffffff;left:749.00px;letter-spacing:-0.365px;">Service</span>
<span class="t" style="top:213.45px;font-size:16px;line-height:16px;font-weight:700;color:#ffffff;left:847.80px;letter-spacing:-0.186px;">Automation</span>
<span class="t" style="top:213.45px;font-size:16px;line-height:16px;font-weight:700;color:#ffffff;left:978.75px;letter-spacing:-0.287px;">Reporting</span>
<span class="t" style="top:280.78px;font-size:24px;line-height:24px;font-weight:700;color:#2d3e50;left:180.00px;letter-spacing:-0.115px;">Reports</span>
<span class="t" style="top:364.83px;font-size:16.5px;line-height:16.5px;font-weight:700;color:#2d3e50;left:266.00px;letter-spacing:-0.521px;">Sources</span>
<span class="t" style="top:364.83px;font-size:16.5px;line-height:16.5px;font-weight:400;color:#3e5671;left:393.70px;letter-spacing:-0.374px;">Pages</span>
<span class="t" style="top:364.83px;font-size:16.5px;line-height:16.5px;font-weight:400;color:#3e5671;left:505.00px;letter-spacing:0.076px;">UTM Parameters</span>
<span class="t" style="top:364.83px;font-size:16.5px;line-height:16.5px;font-weight:400;color:#3e5671;left:697.20px;letter-spacing:0.185px;">Device types</span>
<span class="t" style="top:364.83px;font-size:16.5px;line-height:16.5px;font-weight:400;color:#3e5671;left:859.60px;letter-spacing:0.047px;">Countries</span>
<span class="t" style="top:364.83px;font-size:16.5px;line-height:16.5px;font-weight:400;color:#3e5671;left:996.80px;letter-spacing:-0.138px;">Browsers</span>
<span class="t" style="top:364.83px;font-size:16.5px;line-height:16.5px;font-weight:400;color:#3e5671;left:1130.00px;letter-spacing:0.119px;">Topic clusters</span>
<span class="t" style="top:433.65px;font-size:16px;line-height:16px;font-weight:400;color:#3a5068;left:234.20px;letter-spacing:0.469px;">Date range:</span>
<span class="t" style="top:433.65px;font-size:16px;line-height:16px;font-weight:700;color:#0091ae;left:333.00px;letter-spacing:0.365px;">Last month</span>
<span class="t" style="top:433.65px;font-size:16px;line-height:16px;font-weight:700;color:#0091ae;left:443.30px;letter-spacing:0.612px;">Daily</span>
<span class="t" style="top:432.25px;font-size:16px;line-height:16px;font-weight:400;color:#3a5068;left:517.50px;letter-spacing:0.363px;">Analytics view:</span>
<span class="t" style="top:433.65px;font-size:16px;line-height:16px;font-weight:700;color:#0091ae;left:643.30px;letter-spacing:0.452px;">All analytics activities</span>
<span class="t" style="top:433.65px;font-size:16px;line-height:16px;font-weight:400;color:#3a5068;left:899.20px;letter-spacing:0.540px;">Include offline sources</span>
<span class="t" style="top:541.29px;font-size:26px;line-height:26px;font-weight:700;color:#0091ae;left:288.90px;letter-spacing:-1.039px;">Sessions</span>
<span class="t" style="top:607.07px;font-size:13.5px;line-height:13.5px;font-weight:700;color:#3f5b7c;left:298.90px;letter-spacing:0.538px;">LAST MONTH | DAY</span>
<span class="t" style="top:549.95px;font-size:16px;line-height:16px;font-weight:400;color:#33475b;left:1662.50px;letter-spacing:0.445px;">Compare to:</span>
<span class="t" style="top:549.95px;font-size:16px;line-height:16px;font-weight:700;color:#a8bcd2;left:1766.00px;">No</span>
<span class="t" style="top:651.72px;font-size:14.5px;line-height:14.5px;font-weight:400;color:#425b76;left:324.60px;letter-spacing:0.006px;">Organic search</span>
<span class="t" style="top:651.72px;font-size:14.5px;line-height:14.5px;font-weight:400;color:#425b76;left:462.00px;letter-spacing:-0.229px;">Referrals</span>
<span class="t" style="top:651.72px;font-size:14.5px;line-height:14.5px;font-weight:400;color:#425b76;left:558.00px;letter-spacing:0.087px;">Organic social</span>
<span class="t" style="top:651.72px;font-size:14.5px;line-height:14.5px;font-weight:400;color:#425b76;left:690.00px;letter-spacing:0.146px;">Email marketing</span>
<span class="t" style="top:651.72px;font-size:14.5px;line-height:14.5px;font-weight:400;color:#425b76;left:834.60px;letter-spacing:-0.118px;">Paid search</span>
<span class="t" style="top:651.72px;font-size:14.5px;line-height:14.5px;font-weight:400;color:#425b76;left:949.00px;letter-spacing:-0.023px;">Paid social</span>
<span class="t" style="top:651.72px;font-size:14.5px;line-height:14.5px;font-weight:400;color:#425b76;left:1057.80px;letter-spacing:0.416px;">Direct traffic</span>
<span class="t" style="top:651.72px;font-size:14.5px;line-height:14.5px;font-weight:400;color:#425b76;left:1178.70px;letter-spacing:0.206px;">Other campaigns</span>
<span class="t" style="top:693.49px;font-size:13px;line-height:13px;font-weight:400;color:#3f5670;left:327.89px;">4K</span>
<span class="t" style="top:780.59px;font-size:13px;line-height:13px;font-weight:400;color:#3f5670;left:327.89px;">3K</span>
<span class="t" style="top:866.89px;font-size:13px;line-height:13px;font-weight:400;color:#3f5670;left:327.89px;">2K</span>
<span class="t" style="top:952.59px;font-size:13px;line-height:13px;font-weight:400;color:#3f5670;left:327.89px;">1K</span>
<span class="t" style="top:1039.29px;font-size:13px;line-height:13px;font-weight:400;color:#3f5670;left:336.57px;">0</span>
<span class="t" style="top:1056.09px;font-size:13px;line-height:13px;font-weight:400;color:#3f5670;left:349.35px;letter-spacing:0.5px;">4/1/2024</span>
<span class="t" style="top:1056.09px;font-size:13px;line-height:13px;font-weight:400;color:#3f5670;left:453.83px;letter-spacing:0.5px;">4/3/2024</span>
<span class="t" style="top:1056.09px;font-size:13px;line-height:13px;font-weight:400;color:#3f5670;left:558.31px;letter-spacing:0.5px;">4/5/2024</span>
<span class="t" style="top:1056.09px;font-size:13px;line-height:13px;font-weight:400;color:#3f5670;left:662.79px;letter-spacing:0.5px;">4/7/2024</span>
<span class="t" style="top:1056.09px;font-size:13px;line-height:13px;font-weight:400;color:#3f5670;left:767.27px;letter-spacing:0.5px;">4/9/2024</span>
<span class="t" style="top:1056.09px;font-size:13px;line-height:13px;font-weight:400;color:#3f5670;left:868.36px;letter-spacing:0.5px;">4/11/2024</span>
<span class="t" style="top:1056.09px;font-size:13px;line-height:13px;font-weight:400;color:#3f5670;left:972.36px;letter-spacing:0.5px;">4/13/2024</span>
<span class="t" style="top:1056.09px;font-size:13px;line-height:13px;font-weight:400;color:#3f5670;left:1076.84px;letter-spacing:0.5px;">4/15/2024</span>
<span class="t" style="top:1056.09px;font-size:13px;line-height:13px;font-weight:400;color:#3f5670;left:1181.32px;letter-spacing:0.5px;">4/17/2024</span>
<span class="t" style="top:1056.09px;font-size:13px;line-height:13px;font-weight:400;color:#3f5670;left:1285.80px;letter-spacing:0.5px;">4/19/2024</span>
<span class="t" style="top:1056.09px;font-size:13px;line-height:13px;font-weight:400;color:#3f5670;left:1390.28px;letter-spacing:0.5px;">4/21/2024</span>
<span class="t" style="top:1056.09px;font-size:13px;line-height:13px;font-weight:400;color:#3f5670;left:1494.76px;letter-spacing:0.5px;">4/23/2024</span>
<span class="t" style="top:1056.09px;font-size:13px;line-height:13px;font-weight:400;color:#3f5670;left:1599.24px;letter-spacing:0.5px;">4/25/2024</span>
<span class="t" style="top:1056.09px;font-size:13px;line-height:13px;font-weight:400;color:#3f5670;left:1703.72px;letter-spacing:0.5px;">4/27/2024</span>
<span class="t" style="top:1078.65px;font-size:14px;line-height:14px;font-weight:700;color:#213343;left:1091.00px;letter-spacing:0.034px;">Session date</span>
<span class="t" style="top:1202.65px;font-size:14px;line-height:14px;font-weight:400;color:#5b7797;left:233.55px;letter-spacing:-0.002px;">All sources</span>
</div></div>
</body></html>
